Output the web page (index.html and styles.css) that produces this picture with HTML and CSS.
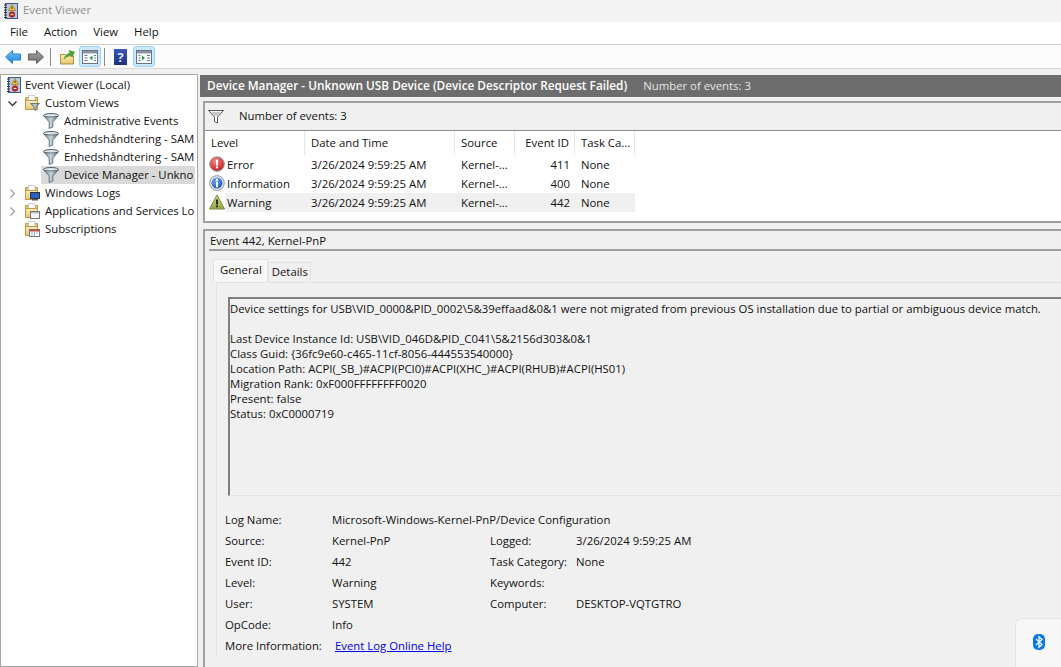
FILE: index.html
```html
<!DOCTYPE html>
<html lang="en">
<head>
  <meta charset="UTF-8">
  <meta name="viewport" content="width=device-width, initial-scale=1.0">
  <title>Event Viewer</title>
  <link rel="stylesheet" href="styles.css">
</head>
<body>
  <svg class="defs" width="0" height="0">
    <defs>
      <linearGradient id="funnel-fill" x1="0" x2="1" y1="0" y2="0">
        <stop offset="0" stop-color="#6f8494"/><stop offset="0.5" stop-color="#c6d3db"/><stop offset="1" stop-color="#566a78"/>
      </linearGradient>
      <linearGradient id="folder-fill" x1="0" x2="0" y1="0" y2="1">
        <stop offset="0" stop-color="#fdeeb0"/><stop offset="1" stop-color="#e6c474"/>
      </linearGradient>
      <radialGradient id="red-ball" cx="0.4" cy="0.3" r="0.8">
        <stop offset="0" stop-color="#f58a8a"/><stop offset="1" stop-color="#c40d12"/>
      </radialGradient>
      <radialGradient id="blue-ball" cx="0.4" cy="0.3" r="0.8">
        <stop offset="0" stop-color="#6fa8ea"/><stop offset="1" stop-color="#1550b4"/>
      </radialGradient>
      <linearGradient id="warn-fill" x1="0" x2="0" y1="0" y2="1">
        <stop offset="0" stop-color="#d3d98a"/><stop offset="1" stop-color="#95a243"/>
      </linearGradient>
      <linearGradient id="back-fill" x1="0" x2="0" y1="0" y2="1">
        <stop offset="0" stop-color="#7cc8f7"/><stop offset="1" stop-color="#1a7fd6"/>
      </linearGradient>
      <linearGradient id="forward-fill" x1="0" x2="0" y1="0" y2="1">
        <stop offset="0" stop-color="#a6a6a6"/><stop offset="1" stop-color="#6e6e6e"/>
      </linearGradient>

      <symbol id="ico-viewer" viewBox="0 0 16 16">
        <rect x="2.500" y="0.500" width="12" height="15" fill="#b9c8de" stroke="#3f5a86"/>
        <path d="M1 2h3M1 4.500h3M1 7h3M1 9.500h3M1 12h3M1 14.500h3" stroke="#333"/>
        <path d="M9 1.500l3.500 6h-7z" fill="#f4c430" stroke="#8a6d10" stroke-width="0.600"/>
        <rect x="8.600" y="3.600" width="0.900" height="2.400" fill="#222"/>
        <circle cx="9" cy="11.500" r="2.800" fill="#cf2a2a" stroke="#7d1010" stroke-width="0.600"/>
        <rect x="7.700" y="11" width="2.600" height="1" fill="#fff"/>
      </symbol>
      <symbol id="ico-funnel" viewBox="0 0 16 16">
        <ellipse cx="8" cy="2.500" rx="7.500" ry="2" fill="#dfe6ea" stroke="#4f5f6b"/>
        <path d="M0.800 3l5.400 6v6.500l3.600-1.500v-5l5.400-6c-2 1.200-12.400 1.200-14.400 0z" fill="url(#funnel-fill)" stroke="#4f5f6b" stroke-width="0.800"/>
      </symbol>
      <symbol id="ico-filter-line" viewBox="0 0 16 16">
        <path d="M0.500 1.500h15l-6 6.500v6l-3-1.500v-4.500z" fill="#fff" stroke="#555"/>
        <path d="M3 3h10l-3.500 4h-3z" fill="#c8c8c8"/>
      </symbol>
      <symbol id="ico-folder" viewBox="0 0 16 16">
        <path d="M1.500 2.500v12h12v-12z" fill="#e6c474" stroke="#b99a55"/>
        <path d="M4.500 0.500h6.500v5h-6.500z" fill="#fff" stroke="#b0b0b0" stroke-width="0.600"/>
        <path d="M1.500 5.500h12v9h-12z" fill="url(#folder-fill)" stroke="#b99a55"/>
      </symbol>
    </defs>
  </svg>

  <div class="app">
    <div class="titlebar">
      <svg class="ico"><use href="#ico-viewer"/></svg>
      <span>Event Viewer</span>
    </div>
    <div class="menubar">
      <span>File</span>
      <span>Action</span>
      <span>View</span>
      <span>Help</span>
    </div>
    <div class="toolbar">
      <svg class="tool-arrow" viewBox="0 0 16 14"><path d="M0.500 7l7-6.500v3.500h8v6h-8v3.500z" fill="url(#back-fill)" stroke="#2a86d0"/></svg>
      <svg class="tool-arrow forward" viewBox="0 0 16 14"><path d="M15.500 7l-7-6.500v3.500h-8v6h8v3.500z" fill="url(#forward-fill)" stroke="#5e5e5e"/></svg>
      <div class="tool-sep"></div>
      <svg class="tool-up" viewBox="0 0 16 16">
        <path d="M0.500 5.500h5l1 1.500h7v8h-13z" fill="url(#folder-fill)" stroke="#b08f45"/>
        <path d="M4 10c1-3 3-5 6-6l-1-2.500 5.500 1.500-2.500 5-1-2c-3 .5-5 2-7 4z" fill="#46a832" stroke="#2c7a20" stroke-width="0.500"/>
      </svg>
      <div class="tool-btn">
        <svg class="tool-pane" viewBox="0 0 16 14">
          <rect x="0.500" y="0.500" width="15" height="13" fill="#fff" stroke="#6b7280"/>
          <rect x="1" y="1" width="14" height="2.500" fill="#8b95a5"/>
          <path d="M2.500 5.500h3M2.500 8h3M2.500 10.500h3M12 5.500h2M12 8h2M12 10.500h2" stroke="#4a78b5"/>
          <path d="M10.500 5.500v5l-3-2.500z" fill="#2e9e3a"/>
        </svg>
      </div>
      <div class="tool-sep second"></div>
      <div class="tool-help">?</div>
      <div class="tool-btn last">
        <svg class="tool-pane" viewBox="0 0 16 14">
          <rect x="0.500" y="0.500" width="15" height="13" fill="#fff" stroke="#6b7280"/>
          <rect x="1" y="1" width="14" height="2.500" fill="#8b95a5"/>
          <path d="M2.500 5.500h2M2.500 8h2M2.500 10.500h2M11 5.500h3M11 8h3M11 10.500h3" stroke="#4a78b5"/>
          <path d="M6 5.500v5l3-2.500z" fill="#2e9e3a"/>
        </svg>
      </div>
    </div>

    <div class="main">
      <!-- Tree -->
      <div class="tree">
        <div class="tree-row">
          <svg class="ico"><use href="#ico-viewer"/></svg>
          <span>Event Viewer (Local)</span>
        </div>
        <div class="tree-row lvl1">
          <svg class="chev" viewBox="0 0 9 9"><path d="M0.500 2.500l4 4 4-4" fill="none" stroke="#333" stroke-width="1.300"/></svg>
          <svg class="ico" viewBox="0 0 16 16">
            <use href="#ico-folder" width="16" height="16"/>
            <path d="M6.500 8.500h9l-3.500 3.500v3.500l-2-1v-2.500z" fill="url(#funnel-fill)" stroke="#4f5f6b" stroke-width="0.700"/>
          </svg>
          <span>Custom Views</span>
        </div>
        <div class="tree-row lvl2">
          <svg class="ico"><use href="#ico-funnel"/></svg>
          <span>Administrative Events</span>
        </div>
        <div class="tree-row lvl2">
          <svg class="ico"><use href="#ico-funnel"/></svg>
          <span>Enhedshåndtering - SAM</span>
        </div>
        <div class="tree-row lvl2">
          <svg class="ico"><use href="#ico-funnel"/></svg>
          <span>Enhedshåndtering - SAM</span>
        </div>
        <div class="tree-row lvl2 selected">
          <svg class="ico"><use href="#ico-funnel"/></svg>
          <span>Device Manager - Unkno</span>
        </div>
        <div class="tree-row lvl1">
          <svg class="chev" viewBox="0 0 9 9"><path d="M2.500 0.500l4 4-4 4" fill="none" stroke="#a0a0a0" stroke-width="1.300"/></svg>
          <svg class="ico" viewBox="0 0 16 16">
            <use href="#ico-folder" width="16" height="16"/>
            <rect x="6.500" y="7.500" width="9" height="6" fill="#2463c4" stroke="#333"/>
            <rect x="8" y="14" width="6" height="1.500" fill="#555"/>
          </svg>
          <span>Windows Logs</span>
        </div>
        <div class="tree-row lvl1">
          <svg class="chev" viewBox="0 0 9 9"><path d="M2.500 0.500l4 4-4 4" fill="none" stroke="#a0a0a0" stroke-width="1.300"/></svg>
          <svg class="ico" viewBox="0 0 16 16">
            <use href="#ico-folder" width="16" height="16"/>
            <rect x="6.500" y="8.500" width="9" height="7" fill="#f4f4f4" stroke="#777"/>
            <rect x="7" y="9" width="8" height="1.500" fill="#b5c4d8"/>
          </svg>
          <span>Applications and Services Lo</span>
        </div>
        <div class="tree-row lvl1 no-chev">
          <svg class="ico" viewBox="0 0 16 16">
            <use href="#ico-folder" width="16" height="16"/>
            <rect x="5.500" y="8.500" width="10" height="7" fill="#fff" stroke="#777"/>
            <rect x="6" y="9" width="9" height="1.500" fill="#d0453a"/>
            <path d="M7.500 12h1M10 12h1M12.500 12h1M7.500 14h1M10 14h1" stroke="#2463c4"/>
          </svg>
          <span>Subscriptions</span>
        </div>
      </div>

      <div class="content">
        <div class="content-head">
          <span class="content-title">Device Manager - Unknown USB Device (Device Descriptor Request Failed)</span>
          <span class="content-count">Number of events: 3</span>
        </div>

        <!-- Events list -->
        <div class="events">
          <div class="events-bar">
            <svg class="ico"><use href="#ico-filter-line"/></svg>
            <span>Number of events: 3</span>
          </div>
          <div class="events-list">
            <div class="list-head">
              <div>Level</div>
              <div>Date and Time</div>
              <div>Source</div>
              <div class="num">Event ID</div>
              <div>Task Ca...</div>
            </div>
            <div class="list-row">
              <svg class="lvl-ico" viewBox="0 0 16 16"><circle cx="8" cy="8" r="7.300" fill="url(#red-ball)" stroke="#9a9a9a"/><rect x="7" y="3.500" width="2" height="6" fill="#fff"/><rect x="7" y="10.500" width="2" height="2" fill="#fff"/></svg>
              <div>Error</div>
              <div>3/26/2024 9:59:25 AM</div>
              <div>Kernel-...</div>
              <div class="num">411</div>
              <div>None</div>
            </div>
            <div class="list-row">
              <svg class="lvl-ico" viewBox="0 0 16 16"><circle cx="8" cy="8" r="7.300" fill="#e9eef5" stroke="#8a8f98"/><circle cx="8" cy="8" r="5.500" fill="url(#blue-ball)"/><rect x="7" y="6.800" width="2" height="5.500" fill="#fff"/><rect x="7" y="3.800" width="2" height="2" fill="#fff"/></svg>
              <div>Information</div>
              <div>3/26/2024 9:59:25 AM</div>
              <div>Kernel-...</div>
              <div class="num">400</div>
              <div>None</div>
            </div>
            <div class="list-row picked">
              <svg class="lvl-ico" viewBox="0 0 16 16"><path d="M8 1l7.500 14h-15z" fill="url(#warn-fill)" stroke="#7f8a45"/><rect x="7.100" y="5.500" width="1.800" height="5" fill="#1c1c1c"/><rect x="7.100" y="11.500" width="1.800" height="1.800" fill="#1c1c1c"/></svg>
              <div>Warning</div>
              <div>3/26/2024 9:59:25 AM</div>
              <div>Kernel-...</div>
              <div class="num">442</div>
              <div>None</div>
            </div>
          </div>
        </div>

        <!-- Event detail -->
        <div class="detail">
          <div class="detail-head">Event 442, Kernel-PnP</div>
          <div class="tabs">
            <div class="tab active">General</div>
            <div class="tab">Details</div>
          </div>
          <div class="tab-body">
            <div class="desc">
              <p>Device settings for USB\VID_0000&amp;PID_0002\5&amp;39effaad&amp;0&amp;1 were not migrated from previous OS installation due to partial or ambiguous device match.</p>
              <p>Last Device Instance Id: USB\VID_046D&amp;PID_C041\5&amp;2156d303&amp;0&amp;1<br>
              Class Guid: {36fc9e60-c465-11cf-8056-444553540000}<br>
              Location Path: ACPI(_SB_)#ACPI(PCI0)#ACPI(XHC_)#ACPI(RHUB)#ACPI(HS01)<br>
              Migration Rank: 0xF000FFFFFFFF0020<br>
              Present: false<br>
              Status: 0xC0000719</p>
            </div>
            <div class="props">
              <div>Log Name:</div><div class="wide">Microsoft-Windows-Kernel-PnP/Device Configuration</div>
              <div>Source:</div><div>Kernel-PnP</div><div>Logged:</div><div>3/26/2024 9:59:25 AM</div>
              <div>Event ID:</div><div>442</div><div>Task Category:</div><div>None</div>
              <div>Level:</div><div>Warning</div><div>Keywords:</div><div></div>
              <div>User:</div><div>SYSTEM</div><div>Computer:</div><div>DESKTOP-VQTGTRO</div>
              <div>OpCode:</div><div class="wide">Info</div>
              <div>More Information:</div><div class="wide"><a href="#" class="help-link">Event Log Online Help</a></div>
            </div>
          </div>
        </div>
      </div>
    </div>
  </div>

  <!-- Tray flyout, sits over the window -->
  <div class="tray">
    <svg class="bt" viewBox="0 0 12 16">
      <rect width="12" height="16" rx="5" fill="#0a78e6"/>
      <path d="M3 5l6 5.500-3 2.800v-10.600l3 2.800-6 5.500" fill="none" stroke="#fff" stroke-width="1.200"/>
    </svg>
  </div>
</body>
</html>
```

FILE: styles.css
```css
/* General Reset */
* {
  margin: 0;
  padding: 0;
  box-sizing: border-box;
}

html, body {
  height: 100%;
  overflow: hidden;
}

body {
  font-family: 'Open Sans', 'Noto Sans', sans-serif;
  font-size: 11.35px;
  color: #111;
  background: #f0f0f0;
}

.defs {
  position: absolute;
}

.ico {
  width: 16px;
  height: 16px;
  flex: none;
}

.app {
  display: flex;
  flex-direction: column;
  height: 667px;
}

/* Title and menu */
.titlebar {
  height: 22px;
  flex: none;
  display: flex;
  align-items: center;
  gap: 4px;
  padding-left: 3px;
  background: #f3f3f3;
  color: #8f8f8f;
}

.titlebar span {
  padding-bottom: 3px;
}

.menubar {
  height: 23px;
  flex: none;
  display: flex;
  align-items: center;
  gap: 16px;
  padding: 0 0 4px 10px;
  background: #fff;
  border-bottom: 1px solid #d0d0d0;
}

/* Toolbar */
.toolbar {
  height: 24px;
  flex: none;
  display: flex;
  align-items: center;
  padding-left: 5px;
  background: #fbfbfb;
  border-bottom: 1px solid #d9d9d9;
}

.tool-arrow {
  width: 16px;
  height: 14px;
}

.tool-arrow.forward {
  margin-left: 7px;
}

.tool-sep {
  width: 1px;
  height: 18px;
  margin-left: 6px;
  background: #8c8c8c;
}

.tool-sep.second {
  margin-left: 3px;
}

.tool-up {
  width: 16px;
  height: 16px;
  margin-left: 9px;
}

.tool-btn {
  width: 22px;
  height: 21px;
  margin-left: 3px;
  display: flex;
  align-items: center;
  justify-content: center;
  background: #cce8ff;
  border: 1px solid #99d1ff;
  border-radius: 3px;
}

.tool-btn.last {
  margin-left: 6px;
}

.tool-pane {
  width: 16px;
  height: 14px;
}

.tool-help {
  width: 13px;
  height: 16px;
  margin-left: 9px;
  background: linear-gradient(#3a57b5, #1f2f82);
  color: #dbe5fa;
  font-weight: bold;
  font-size: 13px;
  line-height: 16px;
  text-align: center;
}

/* Main area */
.main {
  flex: 1;
  min-height: 0;
  display: flex;
  padding: 5px 0 0 0;
  gap: 2px;
}

.tree {
  width: 198px;
  flex: none;
  padding: 1px 2px 0 5px;
  background: #fff;
  border: 1px solid #a6a6a6;
  overflow: hidden;
}

.tree-row {
  height: 18px;
  display: flex;
  align-items: center;
  gap: 3px;
  white-space: nowrap;
  overflow: hidden;
}

.tree-row span {
  padding-bottom: 2px;
}

.tree-row.lvl1 {
  padding-left: 2px;
}

.tree-row.lvl1 .ico {
  margin-left: 4px;
  margin-right: 2px;
}

.tree-row.no-chev {
  padding-left: 14px;
}

.tree-row.lvl2 {
  margin-left: 35px;
  padding-left: 2px;
}

.tree-row.lvl2 .ico {
  margin-right: 2px;
}

.tree-row.selected {
  background: #d9d9d9;
}

.chev {
  width: 9px;
  height: 9px;
  flex: none;
}

/* Right side */
.content {
  flex: 1;
  min-width: 0;
  display: flex;
  flex-direction: column;
  overflow: hidden;
}

.content-head {
  height: 22px;
  flex: none;
  margin-top: 1px;
  padding: 0 0 2px 7px;
  display: flex;
  align-items: center;
  gap: 16px;
  background: #6d6d6d;
  color: #fff;
  white-space: nowrap;
}

.content-title {
  font-size: 11.8px;
  font-weight: 600;
}

.content-count {
  color: #e6e6e6;
}

.events {
  height: 122px;
  flex: none;
  margin: 4px 0 0 3px;
  background: #fff;
  border: 2px solid #a0a0a0;
  border-right: 0;
}

.events-bar {
  height: 28px;
  display: flex;
  align-items: center;
  gap: 15px;
  padding-left: 3px;
  background: #f0f0f0;
  border-bottom: 1px solid #8c8c8c;
}

.events-bar span {
  padding-bottom: 3px;
}

.list-head {
  height: 24px;
  display: grid;
  grid-template-columns: 100px 150px 60px 60px 60px;
  width: 430px;
}

.list-head div {
  padding: 4px 6px;
  border-right: 1px solid #e5e5e5;
  white-space: nowrap;
}

.list-row {
  height: 19px;
  display: grid;
  grid-template-columns: 20px 80px 150px 60px 60px 60px;
  width: 430px;
  align-items: stretch;
}

.list-row div {
  padding: 0 6px;
  line-height: 19px;
  white-space: nowrap;
}

.list-row div:first-of-type {
  padding-left: 2px;
}

.list-row .num, .list-head .num {
  text-align: right;
  padding-right: 5px;
}

.list-row.picked div {
  background: #f0f0f0;
}

.lvl-ico {
  width: 16px;
  height: 16px;
  margin: 1px 0 0 4px;
}

/* Detail pane */
.detail {
  flex: 1;
  min-height: 0;
  margin: 6px 0 0 3px;
  padding-left: 4px;
  border: 2px solid #a0a0a0;
  border-right: 0;
  border-bottom: 0;
}

.detail-head {
  height: 20px;
  line-height: 19px;
  padding-left: 1px;
  border-bottom: 2px solid #a0a0a0;
}

.tabs {
  display: flex;
  align-items: flex-end;
  height: 23px;
  margin: 8px 0 0 4px;
}

.tab {
  height: 20px;
  padding: 1px 2px 0 3px;
  border: 1px solid #e3e3e3;
  border-bottom: 0;
  background: #f0f0f0;
}

.tab.active {
  height: 23px;
  padding: 2px 5px 0 6px;
  background: #f7f7f7;
}

.tab-body {
  margin-left: 7px;
  padding: 14px 0 0 11px;
  border-left: 1px solid #e3e3e3;
  border-top: 1px solid #e3e3e3;
}

.desc {
  height: 199px;
  padding: 2px 0;
  line-height: 15px;
  border: 2px solid #7f7f7f;
  border-right: 0;
  border-bottom: 1px solid #e3e3e3;
  white-space: nowrap;
}

.desc p {
  margin-bottom: 15px;
}

.props {
  margin: 13px 0 0 -3px;
  display: grid;
  grid-template-columns: 107px 158px 86px 1fr;
  grid-auto-rows: 21px;
  line-height: 21px;
  white-space: nowrap;
}

.props .wide {
  grid-column: 2 / 5;
}

.help-link {
  margin-left: 3px;
  color: #0000e6;
}

/* Tray */
.tray {
  position: absolute;
  left: 1015px;
  top: 618px;
  width: 60px;
  height: 60px;
  background: #f7f7f7;
  border: 1px solid #e4e4e4;
  border-radius: 7px;
}

.bt {
  position: absolute;
  left: 17px;
  top: 15px;
  width: 12px;
  height: 16px;
}
```
